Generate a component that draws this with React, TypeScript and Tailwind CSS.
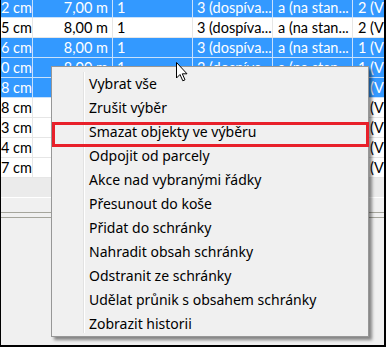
import React from "react";

type Row = { sel: boolean; c: string[] };

const rows: Row[] = [
  { sel: true, c: ["2 cm", "7,00 m", "1", "3 (dospíva...", "a (na stan...", "2 (Vi"] },
  { sel: false, c: ["5 cm", "8,00 m", "1", "3 (dospíva...", "a (na stan...", "2 (Vi"] },
  { sel: true, c: ["6 cm", "8,00 m", "1", "3 (dospíva...", "a (na stan...", "1 (Vi"] },
  { sel: true, c: ["0 cm", "8,00 m", "1", "3 (dospíva...", "a (na stan...", "1 (Vi"] },
  { sel: true, c: ["8 cm", "8,00 m", "1", "3 (dospíva...", "a (na stan...", "1 (Vi"] },
  { sel: false, c: ["8 cm", "8,00 m", "1", "3 (dospíva...", "a (na stan...", "2 (Vi"] },
  { sel: false, c: ["3 cm", "8,00 m", "1", "3 (dospíva...", "a (na stan...", "2 (Vi"] },
  { sel: false, c: ["4 cm", "8,00 m", "1", "3 (dospíva...", "a (na stan...", "2 (Vi"] },
  { sel: false, c: ["7 cm", "8,00 m", "1", "3 (dospíva...", "a (na stan...", "2 (Vi"] },
];

const items = [
  "Vybrat vše",
  "Zrušit výběr",
  "Smazat objekty ve výběru",
  "Odpojit od parcely",
  "Akce nad vybranými řádky",
  "Přesunout do koše",
  "Přidat do schránky",
  "Nahradit obsah schránky",
  "Odstranit ze schránky",
  "Udělat průnik s obsahem schránky",
  "Zobrazit historii",
];

function TableRow({ r }: { r: Row }) {
  const base = r.sel
    ? "bg-[#3399ff] text-white border-[#c9e1fb]"
    : "bg-white text-black border-[#e6e6e6]";
  return (
    <div className={`flex h-[20px] border-b ${base}`}>
      <div className={`w-[32px] shrink-0 border-r ${base} text-right pr-[5px] leading-[20px] overflow-hidden whitespace-nowrap`}>{r.c[0]}</div>
      <div className={`w-[80px] shrink-0 border-r ${base} text-right pr-[4px] leading-[20px] overflow-hidden whitespace-nowrap`}>{r.c[1]}</div>
      <div className={`w-[80px] shrink-0 border-r ${base} pl-[4px] leading-[20px] overflow-hidden whitespace-nowrap`}>{r.c[2]}</div>
      <div className={`w-[80px] shrink-0 border-r ${base} pl-[4px] leading-[20px] overflow-hidden whitespace-nowrap`}>{r.c[3]}</div>
      <div className={`w-[80px] shrink-0 border-r ${base} pl-[5px] leading-[20px] overflow-hidden whitespace-nowrap`}>{r.c[4]}</div>
      <div className={`flex-1 pl-[5px] leading-[20px] overflow-hidden whitespace-nowrap`}>{r.c[5]}</div>
    </div>
  );
}

export default function App() {
  return (
    <div
      className="relative w-[386px] h-[347px] overflow-hidden bg-[#f0f0f0] border-l border-r-2 border-b-2 border-black text-[14px]"
      style={{ fontFamily: '"Noto Sans", "Open Sans", sans-serif' }}
    >
      <div
        className="mt-[-2px] flex flex-col text-[14.5px]"
        style={{ fontFamily: 'Lato, "Noto Sans", sans-serif' }}
      >
        {rows.map((r, i) => (
          <TableRow key={i} r={r} />
        ))}
      </div>
      <div className="h-[20px] bg-[#ebebeb] border-b border-white" />
      <div className="h-[15px] bg-[#f0f0f0] border-b border-[#a5a59c]" />
      <div className="h-[5px] bg-[#f0f0f0] border-b border-[#a5a59c]" />

      {/* context menu */}
      <div className="absolute left-[50px] top-[66px] w-[318px] h-[271px] bg-[#f0f0f0] border border-[#979797] shadow-[3px_3px_3px_rgba(0,0,0,0.45)] flex pt-[5px] pl-[2px]">
        <div className="w-[30px] shrink-0 border-r border-[#e2e2e2] mb-[3px]" />
        <div className="w-px bg-white mb-[3px]" />
        <div className="flex flex-col">
          {items.map((t) => (
            <div key={t} className="h-[24px] leading-[24px] pl-[4px] text-black whitespace-nowrap">
              {t}
            </div>
          ))}
        </div>
      </div>

      {/* red annotation box */}
      <div className="absolute left-[51px] top-[122px] w-[317px] h-[25px] border-[3px] border-[#e8202a]" />

      {/* mouse cursor */}
      <svg className="absolute left-[175px] top-[62px]" width="13" height="20" viewBox="0 0 13 20">
        <path d="M0.5 0.5 L0.5 16 L4 12.5 L6.8 18.8 L9 17.8 L6.3 11.8 L11 11.8 Z" fill="white" stroke="black" strokeWidth="1" strokeLinejoin="miter" />
      </svg>
    </div>
  );
}
